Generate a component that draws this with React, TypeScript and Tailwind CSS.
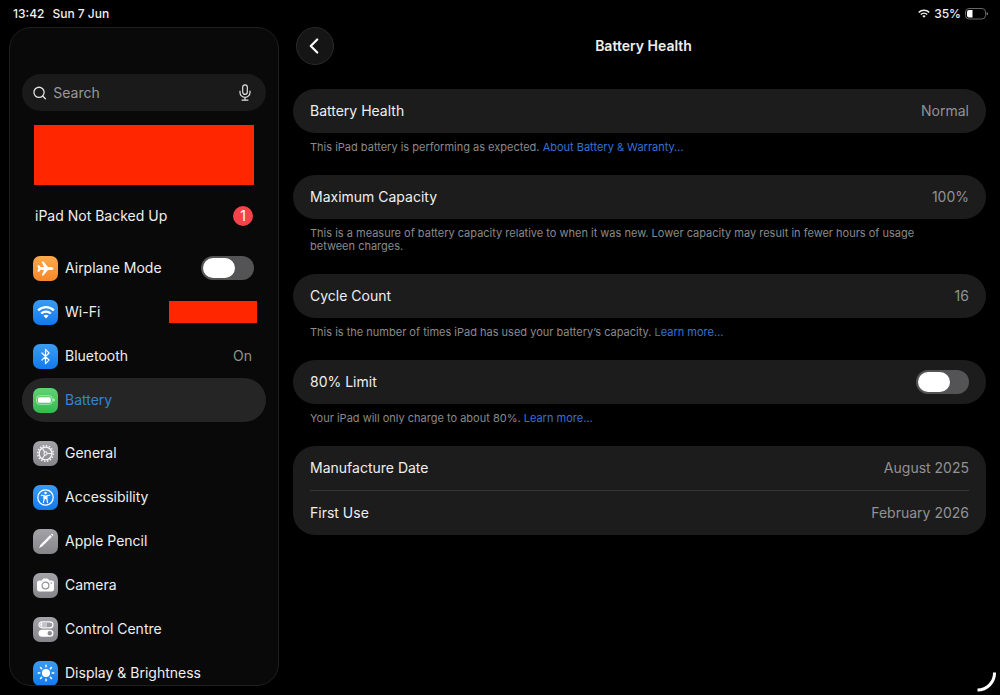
import React, { useState } from 'react';
import { Bluetooth, ChevronLeft, Search } from 'lucide-react';
import { IoAirplane } from 'react-icons/io5';

const ORANGE = 'bg-linear-to-b from-[#fba94c] to-[#f5872a]';
const BLUE = 'bg-linear-to-b from-[#3a9bf2] to-[#1279ee]';
const GREEN = 'bg-linear-to-b from-[#5fd374] to-[#35b950]';
const GRAY = 'bg-linear-to-b from-[#a3a3a8] to-[#85858a]';

function WifiGlyph({ className }: { className?: string }) {
  return (
    <svg viewBox="0 0 24 18" className={className} fill="none" stroke="currentColor" strokeWidth="3" aria-hidden="true">
      <path d="M1.5 6.8a15 15 0 0 1 21 0" />
      <path d="M5.6 11a9.2 9.2 0 0 1 12.8 0" />
      <path d="M12 17.6l-3.4-3.5a5 5 0 0 1 6.8 0z" fill="currentColor" stroke="none" />
    </svg>
  );
}

function MicGlyph() {
  return (
    <svg viewBox="0 0 12 17" className="w-3 h-[17px]" fill="none" stroke="#e4e4e4" strokeWidth="1.2" strokeLinecap="round" aria-hidden="true">
      <rect x="3.7" y="0.8" width="4.6" height="9.6" rx="2.3" />
      <path d="M1 7.2v1.2a5 5 0 0 0 10 0V7.2M6 13.4v2.6M3 16.1h6" />
    </svg>
  );
}

function BatteryGlyph() {
  return (
    <svg viewBox="0 0 20 10" className="w-[19px] h-[10px]" aria-hidden="true">
      <rect x="0.5" y="0.5" width="16.6" height="9" rx="3" fill="none" stroke="#a9e8b3" />
      <rect x="2" y="2" width="13.6" height="6" rx="1.8" fill="#fff" />
      <path d="M18.2 3.2c1 .4 1.5 1 1.5 1.8s-.5 1.4-1.5 1.8z" fill="#e4f9e7" />
    </svg>
  );
}

function GearGlyph() {
  return (
    <svg viewBox="0 0 20 20" className="w-[19px] h-[19px]" fill="none" stroke="#f4f4f4" aria-hidden="true">
      <circle cx="10" cy="10" r="8.2" strokeWidth="1.6" strokeDasharray="1.62 1.6" />
      <circle cx="10" cy="10" r="6.7" strokeWidth="1.5" />
      <circle cx="10" cy="10" r="1.7" strokeWidth="1.1" />
      <path d="M11.7 10h5M9.1 8.5L6.6 4.2M9.1 11.5l-2.5 4.3" strokeWidth="1.2" />
    </svg>
  );
}

function AccessibilityGlyph() {
  return (
    <svg viewBox="0 0 20 20" className="w-[19px] h-[19px]" fill="none" stroke="#fff" strokeLinecap="round" strokeLinejoin="round" aria-hidden="true">
      <circle cx="10" cy="10" r="8.1" strokeWidth="1.3" />
      <circle cx="10" cy="5.2" r="1.3" fill="#fff" stroke="none" />
      <path d="M5.6 7.6l3 .6v3.3l-.8 4M14.4 7.6l-3 .6v3.3l.8 4" strokeWidth="1.2" />
      <path d="M8.6 8.2h2.8v3.3H8.6z" fill="#fff" strokeWidth="0.6" />
    </svg>
  );
}

function PencilGlyph() {
  return (
    <svg viewBox="0 0 16 16" className="w-4 h-4" fill="#fff" aria-hidden="true">
      <path d="M12.2 2l1.7 1.700L4.100 13.400 1 15l1.500-3.200z" />
      <path d="M12.900 1.300l.5-.5c.8-.6 2.400.9 1.800 1.800l-.6.500z" />
    </svg>
  );
}

function CameraGlyph() {
  return (
    <svg viewBox="0 0 18 14" className="w-[17px] h-[14px]" aria-hidden="true">
      <path d="M2.3 2.2H5L6.2.6C6.5.2 6.9 0 7.4 0h3.2c.5 0 .9.2 1.200.6L13 2.200h2.700A2.300 2.300 0 0 1 18 4.500v7a2.300 2.300 0 0 1-2.300 2.300H2.300A2.300 2.300 0 0 1 0 11.500v-7a2.300 2.300 0 0 1 2.300-2.300z" fill="#fff" />
      <circle cx="9" cy="7.6" r="3.6" fill="none" stroke="#929297" strokeWidth="1.3" />
      <circle cx="15" cy="5" r="0.8" fill="#929297" />
    </svg>
  );
}

function ControlGlyph() {
  return (
    <svg viewBox="0 0 16 16" className="w-4 h-4" aria-hidden="true">
      <rect x="1" y="0.8" width="14" height="6" rx="3" fill="none" stroke="#fff" strokeWidth="1.2" />
      <circle cx="4.4" cy="3.8" r="2.2" fill="#fff" />
      <rect x="4" y="1.6" width="5" height="4.4" fill="#c4c4c8" />
      <rect x="0.5" y="8.8" width="15" height="7" rx="3.5" fill="#fff" />
      <circle cx="11.8" cy="12.3" r="2.2" fill="#8b8b90" />
    </svg>
  );
}

function SunGlyph() {
  return (
    <svg viewBox="0 0 18 18" className="w-[18px] h-[18px]" stroke="#fff" strokeWidth="1.5" strokeLinecap="round" aria-hidden="true">
      <circle cx="9" cy="9" r="3.3" fill="#fff" />
      <path d="M9 1.2v1.6M9 15.2v1.6M1.2 9h1.6M15.2 9h1.6M3.5 3.5l1.1 1.1M13.4 13.4l1.1 1.1M3.5 14.5l1.1-1.1M13.4 4.6l1.1-1.1" />
    </svg>
  );
}

interface NavItem {
  label: string;
  tile: string;
  icon: React.ReactNode;
}

const generalItems: NavItem[] = [
  { label: 'General', tile: GRAY, icon: <GearGlyph /> },
  { label: 'Accessibility', tile: BLUE, icon: <AccessibilityGlyph /> },
  { label: 'Apple Pencil', tile: GRAY, icon: <PencilGlyph /> },
  { label: 'Camera', tile: GRAY, icon: <CameraGlyph /> },
  { label: 'Control Centre', tile: GRAY, icon: <ControlGlyph /> },
  { label: 'Display & Brightness', tile: BLUE, icon: <SunGlyph /> },
];

function Tile({ tile, children }: { tile: string; children: React.ReactNode }) {
  return (
    <span className={`flex items-center justify-center w-[25px] h-[25px] shrink-0 rounded-[7px] text-white ${tile}`}>
      {children}
    </span>
  );
}

interface NavLinkProps {
  item: NavItem;
  active?: boolean;
  children?: React.ReactNode;
}

function NavLink({ item, active, children }: NavLinkProps) {
  return (
    <a
      href="#"
      aria-current={active ? 'page' : undefined}
      className={`flex items-center gap-[7px] h-11 shrink-0 pl-[11px] rounded-full ${active ? 'bg-[#252525] text-[#3185cf]' : ''}`}
    >
      <Tile tile={item.tile}>{item.icon}</Tile>
      <span className="grow">{item.label}</span>
      {children}
    </a>
  );
}

function Toggle({ id }: { id: string }) {
  const [on, setOn] = useState(false);
  return (
    <input
      id={id}
      type="checkbox"
      role="switch"
      checked={on}
      onChange={(e) => setOn(e.target.checked)}
      className="appearance-none flex items-center w-[53px] h-6 px-0.5 shrink-0 rounded-full bg-[#545456] checked:bg-[#34c759] checked:justify-end before:block before:w-8 before:h-5 before:rounded-full before:bg-white"
    />
  );
}

function Group({ children, note }: { children: React.ReactNode; note?: React.ReactNode }) {
  return (
    <section>
      <div className="bg-[#1c1c1c] rounded-[22px] px-[17px]">{children}</div>
      {note && <p className="pt-2 px-[17px] max-w-[640px] text-[11px] leading-[13px] text-[#8a8a8c]">{note}</p>}
    </section>
  );
}

function Row({ label, value }: { label: string; value: string }) {
  return (
    <div className="flex items-center justify-between h-11">
      <span>{label}</span>
      <span className="text-[#929294]">{value}</span>
    </div>
  );
}

function NoteLink({ children }: { children: React.ReactNode }) {
  return <a href="#" className="text-[#3871d6]">{children}</a>;
}

export default function App() {
  return (
    <div className="relative flex flex-col h-screen overflow-hidden bg-black text-[#efefef] text-sm font-[Inter,'Liberation_Sans',sans-serif]">
      {/* Status bar */}
      <header className="flex items-center justify-between h-[27px] shrink-0 pl-[13px] pr-3 text-xs font-medium">
        <div className="flex gap-2">
          <span>13:42</span>
          <span>Sun 7 Jun</span>
        </div>
        <div className="flex items-center gap-1">
          <WifiGlyph className="w-3 h-[9px]" />
          <span>35%</span>
          <svg viewBox="0 0 23 12" className="w-[23px] h-3" aria-hidden="true">
            <rect x="0.5" y="0.5" width="20" height="10.5" rx="3.5" fill="none" stroke="#66666a" />
            <path d="M4 2h3.500v7.500H4A2 2 0 0 1 2 7.500V4a2 2 0 0 1 2-2z" fill="#fff" />
            <path d="M21.600 4c1 .3 1.400.9 1.400 1.800s-.4 1.500-1.400 1.800z" fill="#77777a" />
          </svg>
        </div>
      </header>

      <div className="flex grow min-h-0">
        {/* Sidebar */}
        <aside className="flex flex-col w-[270px] shrink-0 ml-[9px] mb-[9px] px-3 pt-[46px] overflow-hidden rounded-[22px] border border-[#1f1f1f] bg-[#090909]">
          <label className="flex items-center h-[37px] shrink-0 pl-[10px] pr-[15px] rounded-full bg-[#1a1a1a]">
            <Search className="w-[18px] h-[18px] text-[#e4e4e4]" />
            <input
              type="text"
              aria-label="Search"
              placeholder="Search"
              className="grow min-w-0 ml-[6px] bg-transparent outline-none placeholder:text-[#99999b]"
            />
            <button type="button" aria-label="Dictate">
              <MicGlyph />
            </button>
          </label>

          <div className="h-[60px] shrink-0 mt-[14px] mx-3 bg-[#ff2600]" />

          <a href="#" className="flex items-center justify-between h-11 shrink-0 mt-[9px] pl-[13px] pr-[13px]">
            iPad Not Backed Up
            <span className="flex items-center justify-center w-5 h-5 rounded-full bg-[#f6434a] text-white">1</span>
          </a>

          <nav className="flex flex-col mt-2">
            <div className="flex items-center gap-[7px] h-11 pl-[11px] pr-3">
              <Tile tile={ORANGE}><IoAirplane className="w-[17px] h-[17px]" /></Tile>
              <label htmlFor="airplane" className="grow">Airplane Mode</label>
              <Toggle id="airplane" />
            </div>
            <NavLink item={{ label: 'Wi-Fi', tile: BLUE, icon: <WifiGlyph className="w-[18px] h-[14px]" /> }}>
              <span className="w-[88px] h-[22px] mr-[9px] bg-[#ff2600]" />
            </NavLink>
            <NavLink item={{ label: 'Bluetooth', tile: BLUE, icon: <Bluetooth className="w-[17px] h-[17px]" strokeWidth={1.75} /> }}>
              <span className="mr-[14px] text-[#929294]">On</span>
            </NavLink>
            <NavLink active item={{ label: 'Battery', tile: GREEN, icon: <BatteryGlyph /> }} />
          </nav>

          <nav className="flex flex-col mt-[9px]">
            {generalItems.map((item) => (
              <NavLink key={item.label} item={item} />
            ))}
          </nav>
        </aside>

        {/* Detail */}
        <main className="grow min-w-0 px-[14px]">
          <div className="flex items-center px-[3px]">
            <button
              type="button"
              aria-label="Back"
              className="flex items-center justify-center w-[38px] h-[38px] shrink-0 pr-[3px] rounded-full border border-[#2a2a2a] bg-[#151515]"
            >
              <ChevronLeft className="w-[26px] h-[26px] text-white" />
            </button>
            <h1 className="grow pr-[30px] text-center font-semibold">Battery Health</h1>
          </div>

          <div className="flex flex-col gap-[21px] mt-6">
            <Group
              note={<>This iPad battery is performing as expected. <NoteLink>About Battery &amp; Warranty…</NoteLink></>}
            >
              <Row label="Battery Health" value="Normal" />
            </Group>

            <Group note="This is a measure of battery capacity relative to when it was new. Lower capacity may result in fewer hours of usage between charges.">
              <Row label="Maximum Capacity" value="100%" />
            </Group>

            <Group
              note={<>This is the number of times iPad has used your battery’s capacity. <NoteLink>Learn more…</NoteLink></>}
            >
              <Row label="Cycle Count" value="16" />
            </Group>

            <Group note={<>Your iPad will only charge to about 80%. <NoteLink>Learn more…</NoteLink></>}>
              <div className="flex items-center justify-between h-11">
                <label htmlFor="limit">80% Limit</label>
                <Toggle id="limit" />
              </div>
            </Group>

            <Group>
              <Row label="Manufacture Date" value="August 2025" />
              <hr className="border-[#363638]" />
              <Row label="First Use" value="February 2026" />
            </Group>
          </div>
        </main>
      </div>

      {/* Corner handle */}
      <svg viewBox="0 0 20 20" className="absolute right-1 bottom-[3px] w-5 h-5" fill="none" stroke="#fff" strokeWidth="3" aria-hidden="true">
        <path d="M18.5 0.5A17 17 0 0 1 1.5 18" />
      </svg>
    </div>
  );
}
